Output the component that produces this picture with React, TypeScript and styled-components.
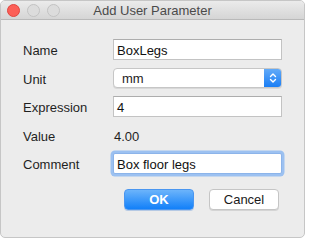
import React from 'react';
import styled, { createGlobalStyle } from 'styled-components';

const Global = createGlobalStyle`
  html, body { margin: 0; padding: 0; background: #ffffff; }
  body { font-family: "Liberation Sans", Arial, sans-serif; font-size: 13px; color: #1d1d1d; }
`;

const Window = styled.div`
  width: 303px;
  height: 236px;
  border: 1px solid #c6c6c6;
  border-radius: 5px;
  background: #ececec;
  overflow: hidden;
  display: flex;
  flex-direction: column;
`;

const TitleBar = styled.div`
  height: 18px;
  flex: none;
  display: flex;
  align-items: center;
  position: relative;
  background: linear-gradient(#ebebeb, #d5d5d5);
  border-bottom: 1px solid #b9b9b9;
`;

const Lights = styled.div`
  display: flex;
  gap: 7px;
  padding-left: 6px;
`;

const Light = styled.span<{ $color: string; $edge: string }>`
  width: 11px;
  height: 11px;
  border-radius: 50%;
  background: ${(p) => p.$color};
  border: 0.5px solid ${(p) => p.$edge};
`;

const Title = styled.div`
  position: absolute;
  left: 0;
  right: 0;
  text-align: center;
  color: #4a4a4a;
  font-size: 13px;
`;

const Form = styled.div`
  display: grid;
  grid-template-columns: 90px 169px;
  grid-auto-rows: 21px;
  row-gap: 7.5px;
  align-items: center;
  padding: 19px 0 0 22px;
`;

const Label = styled.div`
  font-size: 13px;
  padding-top: 2px;
  color: #1f1f1f;
`;

const Field = styled.div<{ $focus?: boolean }>`
  height: 21px;
  box-sizing: border-box;
  background: #fff;
  border: 1px solid #c3c3c3;
  border-top-color: #adadad;
  padding: 1px 3px 0;
  display: flex;
  align-items: center;
  font-size: 13px;
  color: #111;
  ${(p) =>
    p.$focus &&
    `
    border-color: #8cb4ea;
    box-shadow: 0 0 0 2.5px #9cc1f1;
    border-radius: 2px;
  `}
`;

const Select = styled.div`
  height: 20px;
  box-sizing: border-box;
  background: #fff;
  border: 1px solid #c6c6c6;
  border-radius: 4px;
  box-shadow: 0 1px 0 #d8d8d8;
  display: flex;
  align-items: center;
  overflow: hidden;
`;

const SelectText = styled.span`
  flex: 1;
  padding-left: 8px;
  font-size: 13px;
`;

const Stepper = styled.span`
  width: 17px;
  height: 100%;
  display: flex;
  align-items: center;
  justify-content: center;
  background: linear-gradient(#62aaf8, #1a7ef5);
`;

const ValueText = styled.div`
  padding: 2px 0 0 1px;
  font-size: 13px;
  color: #1f1f1f;
`;

const Buttons = styled.div`
  display: flex;
  gap: 15px;
  padding: 15px 0 0 123px;
`;

const Button = styled.div<{ $primary?: boolean }>`
  width: 70px;
  height: 21px;
  box-sizing: border-box;
  border-radius: 4px;
  display: flex;
  align-items: center;
  justify-content: center;
  font-size: 13px;
  font-weight: ${(p) => (p.$primary ? 'bold' : 'normal')};
  background: ${(p) => (p.$primary ? 'linear-gradient(#6cb4fb, #1280f9)' : '#fff')};
  color: ${(p) => (p.$primary ? '#fff' : '#1a1a1a')};
  border: 1px solid ${(p) => (p.$primary ? '#4a96f0' : '#c5c5c5')};
  box-shadow: 0 1px 0 ${(p) => (p.$primary ? '#b5c9e4' : '#d4d4d4')};
`;

const App = () => (
  <>
    <Global />
    <Window>
      <TitleBar>
        <Lights>
          <Light $color="#fc5f57" $edge="#df4640" />
          <Light $color="#dcdcdc" $edge="#c2c2c2" />
          <Light $color="#dcdcdc" $edge="#c2c2c2" />
        </Lights>
        <Title>Add User Parameter</Title>
      </TitleBar>
      <Form>
        <Label>Name</Label>
        <Field>BoxLegs</Field>
        <Label>Unit</Label>
        <Select>
          <SelectText>mm</SelectText>
          <Stepper>
            <svg width="8" height="12" viewBox="0 0 8 12" fill="none" stroke="#fff" strokeWidth="1.4" strokeLinecap="round" strokeLinejoin="round">
              <path d="M1.5 4.5 L4 2 L6.5 4.5" />
              <path d="M1.5 7.5 L4 10 L6.5 7.5" />
            </svg>
          </Stepper>
        </Select>
        <Label>Expression</Label>
        <Field>4</Field>
        <Label>Value</Label>
        <ValueText>4.00</ValueText>
        <Label>Comment</Label>
        <Field $focus>Box floor legs</Field>
      </Form>
      <Buttons>
        <Button $primary>OK</Button>
        <Button>Cancel</Button>
      </Buttons>
    </Window>
  </>
);

export default App;
